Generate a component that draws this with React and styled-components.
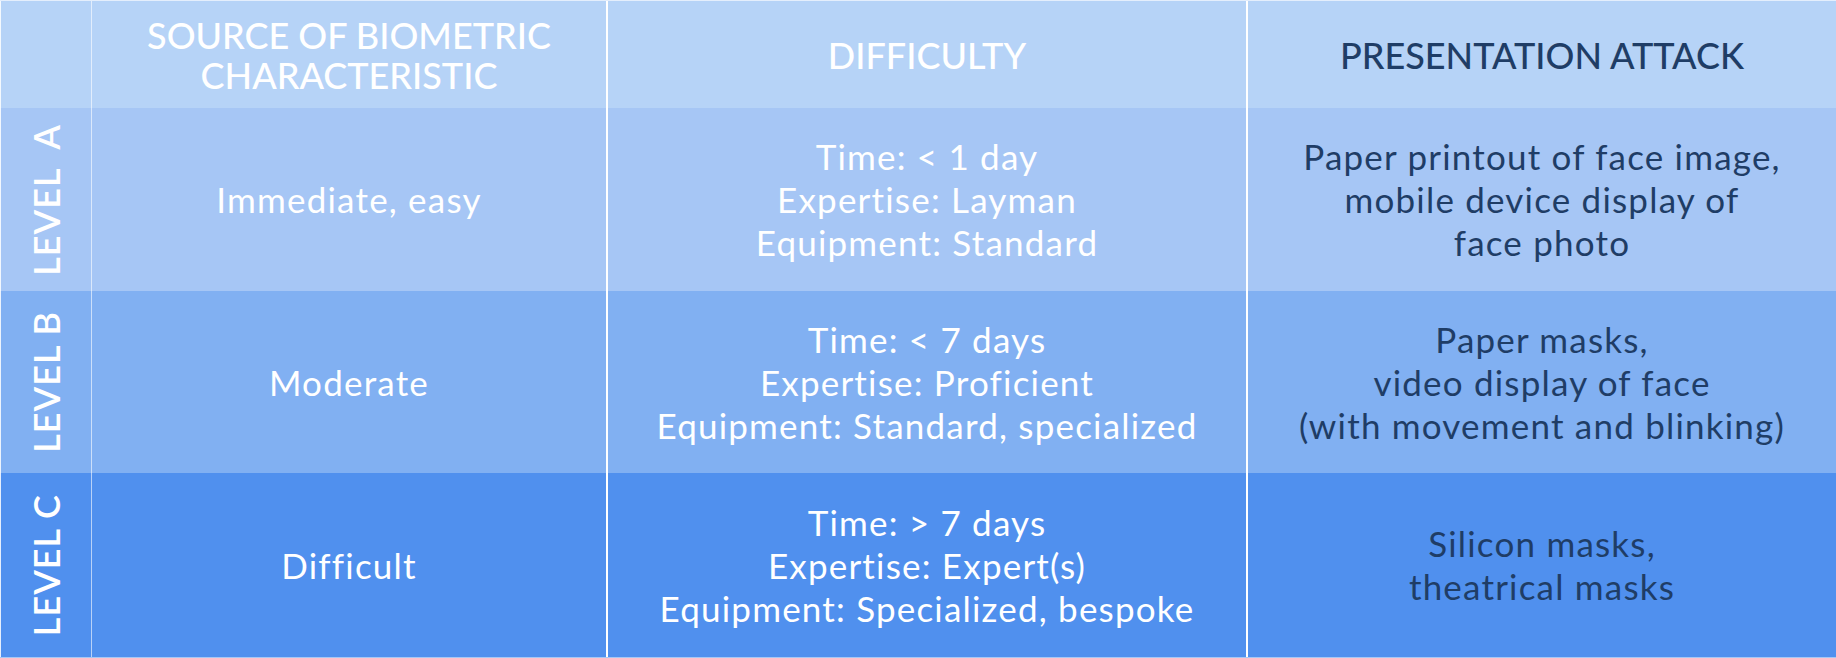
import React from "react";
import styled, { createGlobalStyle } from "styled-components";

const Global = createGlobalStyle`
  html, body { margin: 0; padding: 0; background: #ffffff; }
  body {
    font-family: Lato, "Noto Sans", sans-serif;
    font-variant-ligatures: none;
    font-feature-settings: "liga" 0, "clig" 0;
  }
`;

const Table = styled.div`
  width: 1836px;
  height: 658px;
  display: flex;
  flex-direction: column;
  box-sizing: border-box;
  border-top: 1px solid #e4eefc;
  border-bottom: 1px solid #a6c8f5;
  overflow: hidden;
`;

const Row = styled.div`
  display: grid;
  grid-template-columns: 91px 515px 640px 1fr;
  height: ${(p) => p.$h}px;
  background: ${(p) => p.$bg};
  flex: none;
`;

const Cell = styled.div`
  box-sizing: border-box;
  display: flex;
  align-items: center;
  justify-content: center;
  text-align: center;
  border-left: ${(p) => p.$line};
  color: ${(p) => (p.$dark ? "#1f3d66" : "#ffffff")};
  font-size: 35px;
  line-height: 43px;
  font-weight: 400;
  letter-spacing: 1.2px;
  padding: 0 6px;
`;

const HeadCell = styled(Cell)`
  font-size: 36px;
  line-height: 40px;
  font-weight: 500;
  letter-spacing: 0;
  text-transform: uppercase;
`;

const LevelCell = styled(Cell)`
  padding: 0;
  letter-spacing: 0;
`;

const LevelLabel = styled.span`
  writing-mode: vertical-rl;
  transform: rotate(180deg);
  white-space: pre;
  font-size: 36px;
  line-height: 36px;
  font-weight: 600;
  letter-spacing: 1px;
  color: #ffffff;
`;

const lines = [
  "1px solid rgba(255,255,255,0.85)",
  "1px solid rgba(255,255,255,0.6)",
  "2px solid #ffffff",
  "2px solid #ffffff",
];

const rows = [
  {
    level: "LEVEL  A",
    bg: "#a6c6f5",
    h: 183,
    source: "Immediate, easy",
    difficulty: ["Time: < 1 day", "Expertise: Layman", "Equipment: Standard"],
    attack: ["Paper printout of face image,", "mobile device display of", "face photo"],
  },
  {
    level: "LEVEL B",
    bg: "#81b0f2",
    h: 182,
    source: "Moderate",
    difficulty: ["Time: < 7 days", "Expertise: Proficient", "Equipment: Standard, specialized"],
    attack: ["Paper masks,", "video display of face", "(with movement and blinking)"],
  },
  {
    level: "LEVEL C",
    bg: "#5090ee",
    h: 184,
    source: "Difficult",
    difficulty: ["Time: > 7 days", "Expertise: Expert(s)", "Equipment: Specialized, bespoke"],
    attack: ["Silicon masks,", "theatrical masks"],
  },
];

const Lines = ({ items }) => (
  <div>
    {items.map((t, i) => (
      <div key={i}>{t}</div>
    ))}
  </div>
);

export default function App() {
  return (
    <>
      <Global />
      <Table>
        <Row $bg="#b6d3f7" $h={107}>
          <HeadCell $line={lines[0]} />
          <HeadCell $line={lines[1]}>
            <Lines items={["Source of biometric", "characteristic"]} />
          </HeadCell>
          <HeadCell $line={lines[2]}>Difficulty</HeadCell>
          <HeadCell $line={lines[3]} $dark>
            Presentation attack
          </HeadCell>
        </Row>
        {rows.map((r) => (
          <Row key={r.level} $bg={r.bg} $h={r.h}>
            <LevelCell $line={lines[0]}>
              <LevelLabel>{r.level}</LevelLabel>
            </LevelCell>
            <Cell $line={lines[1]}>{r.source}</Cell>
            <Cell $line={lines[2]}>
              <Lines items={r.difficulty} />
            </Cell>
            <Cell $line={lines[3]} $dark>
              <Lines items={r.attack} />
            </Cell>
          </Row>
        ))}
      </Table>
    </>
  );
}
